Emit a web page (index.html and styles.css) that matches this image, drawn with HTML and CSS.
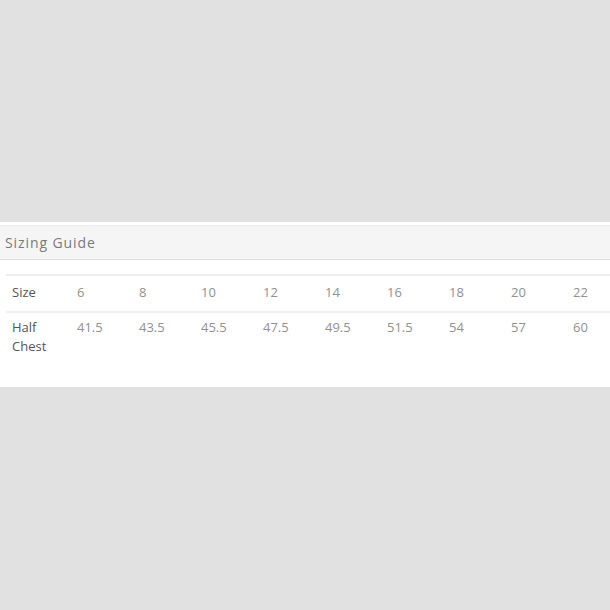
FILE: index.html
```html
<!DOCTYPE html>
<html>
<head>
<meta charset="utf-8">
<link rel="stylesheet" href="styles.css">
</head>
<body>
<div class="page">
  <div class="card">
    <div class="head">Sizing Guide</div>
    <div class="body">
      <table class="guide">
        <tr>
          <th>Size</th><td>6</td><td>8</td><td>10</td><td>12</td><td>14</td><td>16</td><td>18</td><td>20</td><td>22</td>
        </tr>
        <tr>
          <th>Half<br>Chest</th><td>41.5</td><td>43.5</td><td>45.5</td><td>47.5</td><td>49.5</td><td>51.5</td><td>54</td><td>57</td><td>60</td>
        </tr>
      </table>
    </div>
  </div>
</div>
</body>
</html>
```

FILE: styles.css
```css
html, body {
  margin: 0;
  padding: 0;
  background: #e1e1e1;
  width: 610px;
  height: 610px;
  overflow: hidden;
}
.page {
  padding-top: 222px;
}
.card {
  background: #fff;
  padding-top: 3px;
  height: 162px;
  font-family: "Open Sans", "Lato", sans-serif;
}
.head {
  background: #f5f5f5;
  border-top: 1px solid #ebebeb;
  border-bottom: 1px solid #dedede;
  height: 33px;
  line-height: 34px;
  padding-left: 5px;
  font-size: 14px;
  color: #7a7a7a;
  letter-spacing: 0.9px;
}
.body {
  padding: 14px 0 0 6px;
}
.guide {
  border-collapse: collapse;
  width: 604px;
  table-layout: fixed;
  border-top: 2px solid #efefef;
}
.guide tr:first-child {
  border-bottom: 2px solid #efefef;
}
.guide th, .guide td {
  text-align: left;
  vertical-align: top;
  font-weight: normal;
  font-size: 13px;
  line-height: 19px;
  padding: 5px 6px 7px;
}
.guide tr:first-child th, .guide tr:first-child td {
  padding: 7px 6px 9px;
}
.guide th {
  width: 53px;
  color: #555;
}
.guide td {
  width: 50px;
  color: #919191;
}
```
